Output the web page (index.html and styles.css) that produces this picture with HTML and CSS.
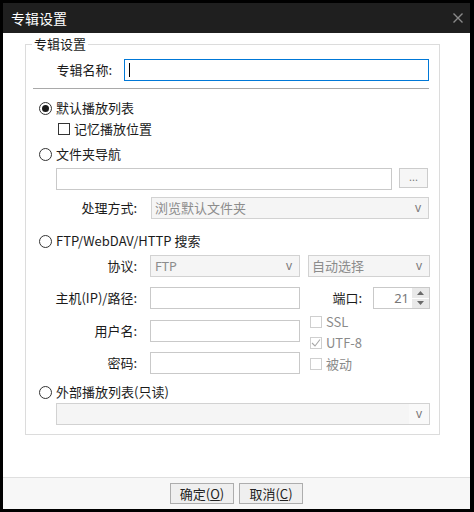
FILE: index.html
```
<!DOCTYPE html>
<html lang="zh-CN">
<head>
<meta charset="utf-8">
<title>专辑设置</title>
<link rel="stylesheet" href="styles.css">
</head>
<body>
<div class="dialog">
  <div class="titlebar">
    <span class="title">专辑设置</span>
    <svg class="close" width="10" height="10" viewBox="0 0 10 10"><path d="M0.5 0.5 L9.5 9.5 M9.5 0.5 L0.5 9.5" stroke="#8a8a8a" stroke-width="1.4" fill="none"/></svg>
  </div>
  <div class="content">
    <div class="group">
      <span class="group-title">专辑设置</span>
      <div class="row name-row">
        <span class="lbl lbl-name">专辑名称:</span>
        <div class="input name-input"><span class="caret"></span></div>
      </div>
      <div class="sep"></div>

      <div class="opt opt-r1"><span class="radio checked"></span>默认播放列表</div>
      <div class="opt chk-row"><span class="chk"></span>记忆播放位置</div>

      <div class="opt opt-r2"><span class="radio"></span>文件夹导航</div>
      <div class="row folder-row">
        <div class="input folder-input"></div>
        <div class="browse">...</div>
      </div>
      <div class="row proc-row">
        <span class="lbl lbl-wide">处理方式:</span>
        <div class="select proc-select"><span>浏览默认文件夹</span><span class="chev">v</span></div>
      </div>

      <div class="opt opt-r3"><span class="radio"></span>FTP/WebDAV/HTTP 搜索</div>
      <div class="row proto-row">
        <span class="lbl lbl-wide lbl-13">协议:</span>
        <div class="select proto-select"><span>FTP</span><span class="chev">v</span></div>
        <div class="select enc-select"><span>自动选择</span><span class="chev">v</span></div>
      </div>
      <div class="row host-row">
        <span class="lbl lbl-wide lbl-13">主机(IP)/路径:</span>
        <div class="input field"></div>
        <span class="lbl lbl-port">端口:</span>
        <div class="spin">
          <span class="spin-val">21</span>
          <span class="spin-btns">
            <span class="spin-btn"><svg width="7" height="4" viewBox="0 0 7 4"><path d="M3.5 0 L7 4 L0 4 Z" fill="#6a6a6a"/></svg></span>
            <span class="spin-btn"><svg width="7" height="4" viewBox="0 0 7 4"><path d="M0 0 L7 0 L3.5 4 Z" fill="#6a6a6a"/></svg></span>
          </span>
        </div>
      </div>
      <div class="cred">
        <div class="cred-left">
          <div class="row user-row">
            <span class="lbl lbl-wide lbl-13">用户名:</span>
            <div class="input field"></div>
          </div>
          <div class="row pass-row">
            <span class="lbl lbl-wide lbl-13">密码:</span>
            <div class="input field"></div>
          </div>
        </div>
        <div class="cred-right">
          <div class="copt"><span class="chk dis"></span>SSL</div>
          <div class="copt"><span class="chk dis"><svg width="10" height="10" viewBox="0 0 10 10"><path d="M1 5 L4 8 L9 1.5" stroke="#a8a8a8" stroke-width="1.1" fill="none"/></svg></span>UTF-8</div>
          <div class="copt"><span class="chk dis"></span>被动</div>
        </div>
      </div>

      <div class="opt opt-r4"><span class="radio"></span>外部播放列表(只读)</div>
      <div class="row ext-row">
        <div class="select ext-select"><span></span><span class="chev chev-box">v</span></div>
      </div>
    </div>
  </div>
  <div class="footer">
    <button class="btn">确定(<u>O</u>)</button>
    <button class="btn">取消(<u>C</u>)</button>
  </div>
</div>
</body>
</html>
```
FILE: styles.css
```
* { box-sizing: border-box; }
html, body { margin: 0; background: #000; }
body {
  font-family: "Noto Sans CJK SC", "Noto Sans", sans-serif;
  font-size: 13px;
  line-height: 16px;
  color: #1b1b1b;
}
.dialog {
  margin: 3px 0 0 3px;
  width: 467px;
  height: 506px;
  display: flex;
  flex-direction: column;
  background: #fff;
}
.titlebar {
  height: 30px;
  flex: none;
  background: #1f1f1f;
  display: flex;
  align-items: center;
  justify-content: space-between;
  padding: 0 7px 0 8px;
  color: #fff;
  font-size: 14px;
}
.close { display: block; }
.content {
  height: 444px;
  flex: none;
  padding: 11px 30px 0 22px;
}
.group {
  position: relative;
  border: 1px solid #dcdcdc;
  padding: 0 0 9px 0;
}
.group-title {
  position: absolute;
  left: 6px;
  top: -9px;
  padding: 0 2px;
  background: #fff;
  line-height: 16px;
}
.row { display: flex; align-items: center; height: 22px; }
.lbl { text-align: right; white-space: nowrap; }
.name-row { margin-top: 14px; }
.lbl-name { width: 86px; margin-right: 12px; }
.lbl-wide { width: 111px; margin-right: 14px; }
.lbl-13 { margin-right: 13px; }
.input {
  height: 22px;
  border: 1px solid #c9c9c9;
  background: #fff;
}
.name-input {
  width: 305px;
  border-color: #0078d7;
  display: flex;
  align-items: center;
  padding-left: 4px;
}
.caret { width: 1px; height: 14px; background: #000; }
.sep {
  margin: 7px 0 0 7px;
  width: 396px;
  height: 1px;
  background: #a9a9a9;
}
.opt { display: flex; align-items: center; height: 20px; }
.opt-r1 { margin: 9px 0 0 13px; }
.opt-r2 { margin: 5px 0 0 13px; }
.opt-r3 { margin: 12px 0 0 13px; }
.opt-r4 { margin: 8px 0 0 13px; }
.chk-row { margin: 1px 0 0 32px; }
.radio {
  width: 13px;
  height: 13px;
  border: 1px solid #333;
  border-radius: 50%;
  margin-right: 4px;
  display: flex;
  align-items: center;
  justify-content: center;
  flex: none;
}
.radio.checked::after {
  content: "";
  width: 7px;
  height: 7px;
  border-radius: 50%;
  background: #1a1a1a;
}
.chk {
  width: 12px;
  height: 12px;
  border: 1px solid #333;
  margin-right: 4px;
  flex: none;
  display: flex;
  align-items: center;
  justify-content: center;
}
.chk.dis { border-color: #cfcfcf; }
.folder-row { margin: 4px 0 0 30px; align-items: flex-start; }
.folder-input { width: 336px; }
.browse {
  margin-left: 7px;
  width: 29px;
  height: 20px;
  border: 1px solid #cccccc;
  background: #f6f6f6;
  color: #7a7a7a;
  font-family: "Noto Sans", sans-serif;
  font-size: 11px;
  line-height: 16px;
  text-align: center;
}
.proc-row { margin-top: 7px; }
.select {
  height: 22px;
  border: 1px solid #d2d2d2;
  background: #f5f5f5;
  color: #8c8c8c;
  display: flex;
  align-items: center;
  justify-content: space-between;
  padding: 0 7px 0 3px;
  white-space: nowrap;
}
.chev {
  font-family: "Noto Sans", sans-serif;
  font-size: 12px;
  color: #7a7a7a;
}
.proc-select { width: 278px; }
.proto-row { margin-top: 4px; }
.proto-select { width: 150px; padding-left: 4px; font-family: "Noto Sans", sans-serif; }
.enc-select { width: 122px; margin-left: 8px; }
.host-row { margin-top: 10px; }
.field { width: 150px; }
.lbl-port { width: 62px; margin-right: 11px; }
.spin {
  width: 57px;
  height: 22px;
  border: 1px solid #c9c9c9;
  display: flex;
  background: #fff;
}
.spin-val {
  flex: 1;
  text-align: right;
  padding-right: 3px;
  color: #777;
  font-family: "Noto Sans", sans-serif;
  line-height: 20px;
}
.spin-btns {
  width: 17px;
  display: flex;
  flex-direction: column;
  gap: 1px;
  background: #fff;
}
.spin-btn {
  flex: 1;
  background: #e9e9e9;
  display: flex;
  align-items: center;
  justify-content: center;
}
.cred { display: flex; }
.cred-left { margin-top: 11px; }
.pass-row { margin-top: 10px; }
.cred-right { margin: 2px 0 0 10px; }
.copt {
  display: flex;
  align-items: center;
  height: 21px;
  color: #8a8a8a;
}
.ext-row { margin: 1px 0 0 30px; }
.ext-select { width: 374px; padding-right: 0; }
.chev-box {
  width: 20px;
  height: 20px;
  line-height: 20px;
  text-align: center;
  background: #f9f9f9;
}
.footer {
  flex: 1;
  border-top: 1px solid #dfdfdf;
  background: #f7f7f7;
  display: flex;
  justify-content: center;
  align-items: center;
  gap: 5px;
}
.btn {
  width: 64px;
  height: 21px;
  border: 1px solid #adadad;
  background: #efefef;
  font: inherit;
  line-height: 17px;
  color: #222;
  padding: 0;
}
```
